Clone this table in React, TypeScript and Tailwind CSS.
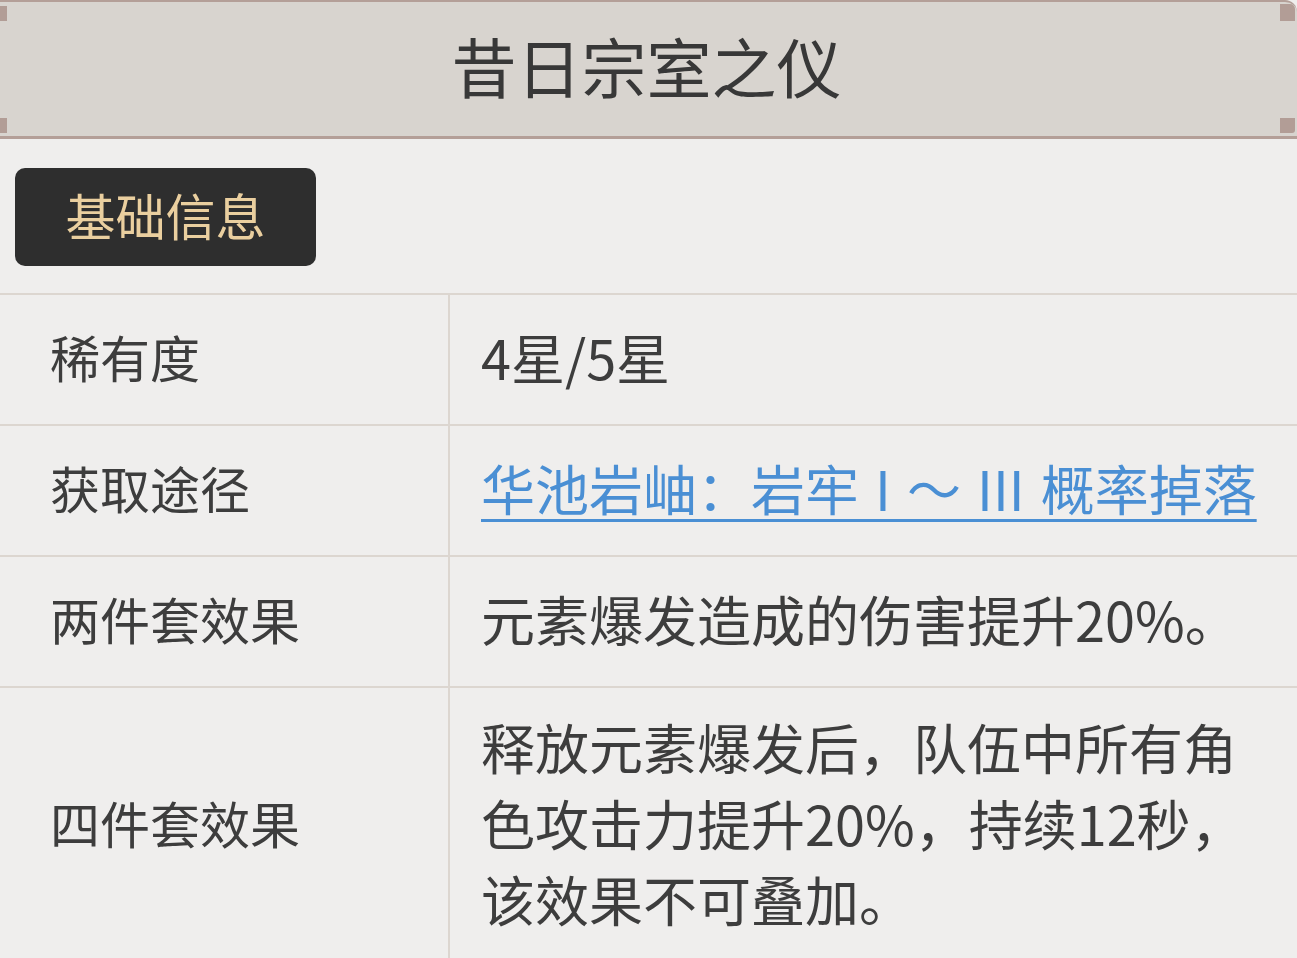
import React from "react";

const font = { fontFamily: '"Noto Sans CJK SC", "Noto Sans", sans-serif' };

function Row({ label, children, tall }: { label: string; children: React.ReactNode; tall?: boolean }) {
  return (
    <div className={`grid grid-cols-[450px_1fr] border-t-2 border-[#dcd6d0] ${tall ? "h-[276px]" : "h-[131px]"}`}>
      <div className="flex items-center pl-[50px] pb-[6px] border-r-2 border-[#dcd6d0] text-[50px] text-[#3d3d3d]">
        {label}
      </div>
      <div className="flex items-center pl-[31px] pb-[6px] text-[54px] text-[#3d3d3d]">{children}</div>
    </div>
  );
}

export default function App() {
  return (
    <div className="w-[1297px] h-[958px] overflow-hidden bg-[#efeeed]" style={font}>
      <div className="flex h-[139px] bg-[#d8d4cf] border-t-2 border-b-[3px] border-[#b49f98] rounded-tr-[12px]">
        <div className="flex flex-col justify-between pt-[4px] pb-[3px]">
          <div className="w-[7px] h-[15px] bg-[#b29d96]" />
          <div className="w-[7px] h-[15px] bg-[#b29d96]" />
        </div>
        <div className="flex flex-1 items-center justify-center pb-[8px] pl-[6px] text-[65px] leading-none text-[#383838]">
          昔日宗室之仪
        </div>
        <div className="flex flex-col justify-between pt-[2px] pb-[3px] pr-[2px]">
          <div className="w-[15px] h-[17px] bg-[#b29d96] rounded-tr-[5px]" />
          <div className="w-[15px] h-[15px] bg-[#b29d96] rounded-br-[3px]" />
        </div>
      </div>
      <div className="pt-[29px] pl-[15px] pb-[27px]">
        <div className="flex w-[301px] h-[98px] items-center justify-center pb-[6px] rounded-[10px] bg-[#2e2e2e] text-[50px] leading-none text-[#eacf9f]">
          基础信息
        </div>
      </div>
      <Row label="稀有度">4星/5星</Row>
      <Row label="获取途径">
        <span className="text-[#4a8fd4] underline decoration-[3px] underline-offset-[8px] whitespace-nowrap [word-spacing:4px]">
          华池岩岫：岩牢 I ～ III 概率掉落
        </span>
      </Row>
      <Row label="两件套效果">元素爆发造成的伤害提升20%。</Row>
      <Row label="四件套效果" tall>
        <div className="leading-[76px] pr-[40px] pt-[2px]">
          释放元素爆发后，队伍中所有角色攻击力提升20%，持续12秒，该效果不可叠加。
        </div>
      </Row>
    </div>
  );
}
